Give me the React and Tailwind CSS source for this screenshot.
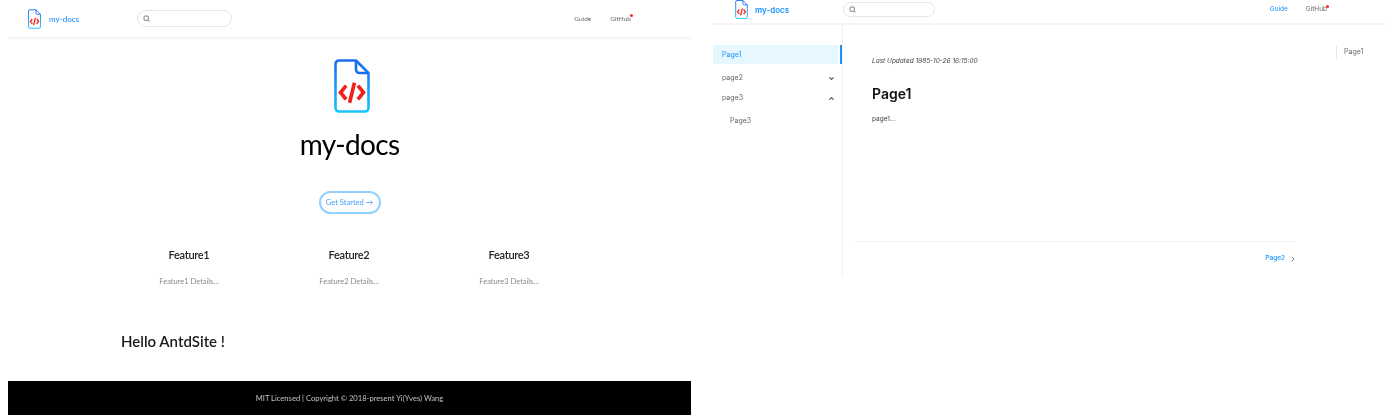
import React from 'react';
import { Search, ChevronDown, ChevronUp, ChevronRight } from 'lucide-react';

const DocLogo = ({ id, className }) => (
    <svg viewBox="0 0 36 54" fill="none" className={className}>
        <defs>
            <linearGradient id={id} x1="0" y1="0" x2="0" y2="1">
                <stop offset="0" stopColor="#1a6cf0" />
                <stop offset="1" stopColor="#17c3ff" />
            </linearGradient>
        </defs>
        <path
            d="M5 1.5H22L34.5 14V49A3.5 3.5 0 0 1 31 52.5H5A3.5 3.5 0 0 1 1.5 49V5A3.5 3.5 0 0 1 5 1.5Z"
            stroke={`url(#${id})`}
            strokeWidth="2.6"
            strokeLinejoin="round"
        />
        <path d="M22 1.5V10.5A3.5 3.5 0 0 0 25.5 14H34.5" stroke="#1a6cf0" strokeWidth="2.6" strokeLinejoin="round" />
        <path
            d="M11 28L6.5 33.5L11 39M25 28L29.5 33.5L25 39M20 25.5L16 42"
            stroke="#f0201c"
            strokeWidth="3.6"
            strokeLinecap="square"
            strokeLinejoin="miter"
        />
    </svg>
);

const SearchBox = ({ className }) => (
    <div className={`flex items-center rounded-full border border-[#e6e6e6] bg-white pl-[5px] ${className}`}>
        <Search className="h-[7px] w-[7px] text-[#9a9a9a]" strokeWidth={3.5} />
    </div>
);

const GithubLink = () => (
    <span className="relative">
        GitHub
        <span className="absolute -right-[2px] top-0 h-[3px] w-[3px] rounded-full bg-[#f5222d]" />
    </span>
);

const features = [
    { title: 'Feature1', details: 'Feature1 Details...' },
    { title: 'Feature2', details: 'Feature2 Details...' },
    { title: 'Feature3', details: 'Feature3 Details...' },
];

const HomePanel = () => (
    <div className="flex h-[415px] w-[683px] shrink-0 flex-col font-['Lato',sans-serif]">
        <header className="flex h-[39px] shrink-0 items-center border-b-2 border-[#f5f5f5] pl-5 pr-[60px]">
            <DocLogo id="navLogoA" className="h-[20px] w-[13px]" />
            <span className="ml-2 w-[88px] text-[8px] font-medium text-[#1890ff]">my-docs</span>
            <SearchBox className="h-[17px] w-[95px]" />
            <nav className="ml-auto flex gap-[19px] text-[6.5px] text-[#666]">
                <span>Guide</span>
                <GithubLink />
            </nav>
        </header>

        <section className="flex flex-col items-center">
            <DocLogo id="heroLogo" className="ml-[5px] mt-[20px] h-[54px] w-[36px]" />
            <h1 className="mt-[11px] text-[28px] leading-[40px] tracking-[-0.7px] text-black">my-docs</h1>
            <button className="mt-[27px] h-[23px] w-[62px] rounded-full border-2 border-[#91d0ff] text-[7.5px] text-[#40a0ff]">
                Get Started →
            </button>
        </section>

        <section className="mt-[32px] flex gap-[60px] pl-[131px]">
            {features.map((feature) => (
                <div key={feature.title} className="w-[100px] text-center">
                    <h2 className="text-[11px] leading-[18px] font-semibold tracking-[-0.3px] text-[#222]">{feature.title}</h2>
                    <p className="mt-[12px] text-[7.5px] leading-[12px] text-[#888]">{feature.details}</p>
                </div>
            ))}
        </section>

        <h2 className="mt-[41px] pl-[113px] text-[15px] leading-[24px] font-semibold text-[#1a1a1a]">Hello AntdSite !</h2>

        <footer className="mt-auto flex h-[34px] items-center justify-center bg-black pt-px text-[7.6px] text-[#c4c4c4]">
            MIT Licensed | Copyright © 2018-present Yi(Yves) Wang
        </footer>
    </div>
);

const DocsSidebar = () => (
    <aside className="h-[251px] w-[131px] shrink-0 border-r border-[#f0f0f0] pl-px pt-[20px] text-[7px] text-[#666]">
        <div className="flex h-[19px] items-center justify-between">
            <div className="flex h-full w-[125px] items-center bg-[#e6f7ff] pl-[9px] pt-[2px] text-[#1890ff]">Page1</div>
            <div className="h-full w-[2px] bg-[#1890ff]" />
        </div>
        <div className="mt-[4px] flex h-[20px] items-center justify-between pl-[9px] pr-[7px]">
            page2
            <ChevronDown className="h-[7px] w-[7px] text-[#555]" strokeWidth={4} />
        </div>
        <div className="flex h-[20px] items-center justify-between pl-[9px] pr-[7px]">
            page3
            <ChevronUp className="h-[7px] w-[7px] text-[#555]" strokeWidth={4} />
        </div>
        <div className="mt-[3px] flex h-[20px] items-center pl-[17px]">Page3</div>
    </aside>
);

const DocsPanel = () => (
    <div className="flex w-[673px] shrink-0 flex-col font-['Inter',sans-serif]">
        <header className="flex h-[25px] shrink-0 items-center border-b-2 border-[#f5f5f5] pb-[4px] pl-[23px] pr-[58px]">
            <DocLogo id="navLogoB" className="h-[19px] w-[13px]" />
            <span className="ml-[7px] w-[88px] text-[8px] font-semibold text-[#1890ff]">my-docs</span>
            <SearchBox className="h-[15px] w-[92px]" />
            <nav className="ml-auto flex gap-[18px] text-[6.5px] text-[#666]">
                <span className="text-[#1890ff]">Guide</span>
                <GithubLink />
            </nav>
        </header>

        <div className="flex">
            <DocsSidebar />
            <main className="w-[453px] shrink-0 pl-[29px] pt-[32px] text-[#444]">
                <p className="text-[6.5px] leading-[8px] italic">Last Updated 1985-10-26 16:15:00</p>
                <h1 className="mt-[18px] text-[14px] leading-[22px] font-semibold text-[#111]">Page1</h1>
                <p className="mt-[10px] text-[6.5px] leading-[8px]">page1...</p>
                <div className="mt-[118px] -ml-[17px] border-t border-[#f2f2f2]" />
                <div className="mt-[12px] -mr-px flex items-center justify-end text-[6.5px] font-medium text-[#1890ff]">
                    Page2
                    <ChevronRight className="ml-[4px] h-[8px] w-[8px] text-[#888]" strokeWidth={3} />
                </div>
            </main>
            <div className="ml-[40px] mt-[21px] flex h-[13px] items-center border-l border-[#e5e5e5] pl-[7px] text-[7px] text-[#666]">
                Page1
            </div>
        </div>
    </div>
);

const App = () => (
    <div className="flex h-[415px] w-[1400px] gap-[21px] overflow-hidden bg-white pl-2 blur-[0.35px]">
        <HomePanel />
        <DocsPanel />
    </div>
);

export default App;
